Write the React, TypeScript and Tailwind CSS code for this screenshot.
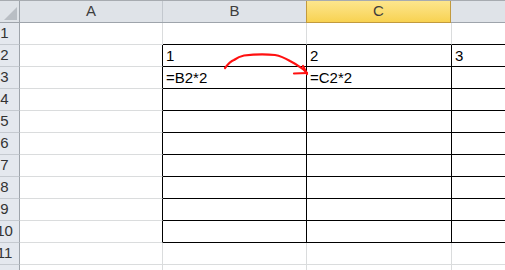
import React from 'react'

const colWidths = ['w-[143px]', 'w-[144px]', 'w-[145px]', 'w-[145px]']
const colNames = ['A', 'B', 'C', 'D']
const rows = [1, 2, 3, 4, 5, 6, 7, 8, 9, 10, 11, 12]

const values: Record<string, string> = {
  B2: '1',
  C2: '2',
  D2: '3',
  B3: '=B2*2',
  C3: '=C2*2',
}

function cellBorder(r: number, c: number) {
  const inBox = r >= 2 && r <= 10
  let right = 'border-r-[#dadcdd]'
  let bottom = 'border-b-[#dadcdd]'
  if (c >= 1 && inBox) {
    right = 'border-r-black'
    bottom = 'border-b-black'
  }
  if (c === 0 && inBox) right = 'border-r-black'
  if (c >= 1 && r === 1) bottom = 'border-b-black'
  return `${right} ${bottom}`
}

function Arrow() {
  return (
    <svg
      className="pointer-events-none absolute left-0 top-0"
      width="505"
      height="270"
      viewBox="0 0 505 270"
      fill="none"
    >
      <path
        d="M225 68 C228 64 231 61 234 60 C238 57 241 56 244 55.5 C252 54.5 266 54 275 55 C281 56 285 58 290 61 C296 64 300 67 303 69 L307 73"
        stroke="#ff1010"
        strokeWidth="2.2"
        strokeLinecap="round"
        strokeLinejoin="round"
      />
      <path d="M294 73.5 L307 73" stroke="#ff1010" strokeWidth="2.2" strokeLinecap="round" />
      <path d="M303 66 L307 74" stroke="#ff1010" strokeWidth="2.2" strokeLinecap="round" />
    </svg>
  )
}

export default function App() {
  return (
    <div
      className="relative h-[270px] w-[505px] overflow-hidden bg-white text-[15px] text-black"
      style={{ fontFamily: '"Liberation Sans", "Noto Sans", sans-serif' }}
    >
      {/* column headers */}
      <div className="flex h-[23px] w-[600px] border-t border-b border-t-[#a7abb0] border-b-[#9ea4ab] bg-[#dfe3e8]">
        <div className="flex w-[20px] shrink-0 items-end justify-end border-r border-r-[#9ea4ab] pb-[2px] pr-[2px]">
          <svg width="13" height="13" viewBox="0 0 13 13">
            <polygon points="13,0 13,13 0,13" fill="#b9bec4" />
          </svg>
        </div>
        {colNames.map((name, i) => (
          <div
            key={name}
            className={`${colWidths[i]} flex shrink-0 items-center justify-center border-r ${
              name === 'C'
                ? '-mb-px -ml-px border-l border-b border-[#c29a3e] bg-gradient-to-b from-[#fde68c] to-[#f8d250]'
                : 'border-r-[#c3c8ce]'
            } text-[15px] text-[#3d3d3d]`}
          >
            {name}
          </div>
        ))}
      </div>

      {/* rows */}
      {rows.map((r) => (
        <div key={r} className="flex h-[22px] w-[600px]">
          <div className="w-[20px] shrink-0 overflow-hidden border-r border-b border-r-[#9ea4ab] border-b-[#c5cad0] bg-[#e4e8ee]">
            <div className="-ml-[10px] flex h-full w-[29px] items-center justify-center text-[15px] text-[#333]">
              {r}
            </div>
          </div>
          {colNames.map((name, c) => (
            <div
              key={name}
              className={`${colWidths[c]} flex shrink-0 items-end overflow-hidden whitespace-nowrap border-r border-b ${cellBorder(r, c)} pb-[1px] pl-[3px] leading-[18px]`}
            >
              {values[`${name}${r}`] ?? ''}
            </div>
          ))}
        </div>
      ))}

      <Arrow />
    </div>
  )
}
